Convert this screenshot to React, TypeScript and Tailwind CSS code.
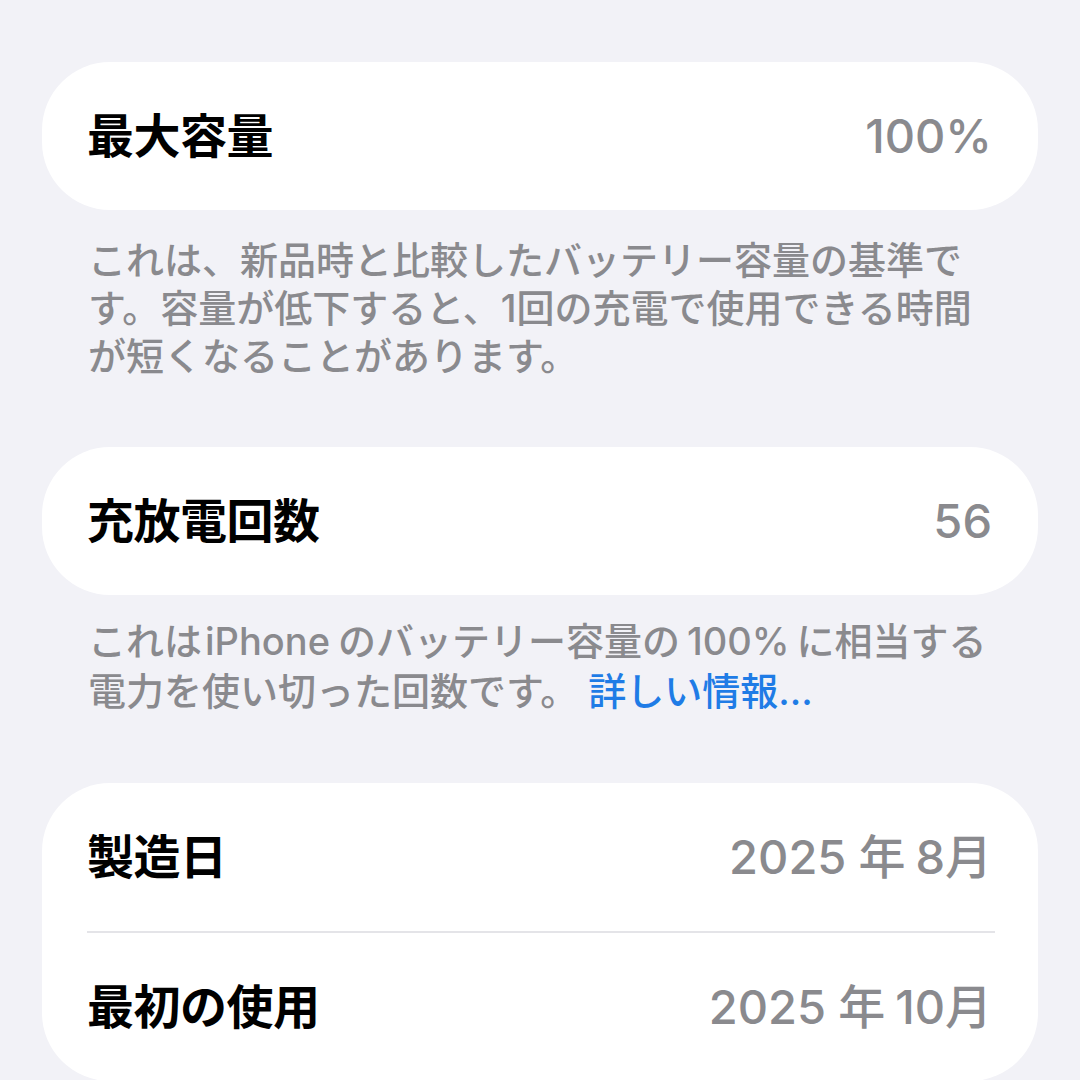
import React from 'react'

const FONT = { fontFamily: 'Inter, "Noto Sans CJK JP", sans-serif' }

function Row({ label, value }: { label: string; value: React.ReactNode }) {
  return (
    <div className="h-[148px] flex items-center justify-between pl-[45px] pr-[46px]">
      <span className="text-[47px] font-bold text-black tracking-[-0.5px]">{label}</span>
      <span className="text-[47px] font-medium text-[#8a8a8e]">{value}</span>
    </div>
  )
}

function YearMonth({ year, month }: { year: string; month: string }) {
  return (
    <>
      {year}
      <span className="ml-[12px] mr-[10px]">年</span>
      {month}月
    </>
  )
}

export default function App() {
  return (
    <div className="w-[1080px] h-[1080px] overflow-hidden bg-[#f2f2f7] pt-[62px] px-[42px]" style={FONT}>
      {/* 最大容量 */}
      <div className="rounded-[68px] bg-white">
        <Row label="最大容量" value="100%" />
      </div>
      <p className="px-[46px] pt-[26px] text-[38px] leading-[48px] font-medium text-[#8a8a8e] whitespace-nowrap">
        これは、新品時と比較したバッテリー容量の基準で
        <br />
        す。容量が低下すると、1回の充電で使用できる時間
        <br />
        が短くなることがあります。
      </p>

      {/* 充放電回数 */}
      <div className="mt-[67px] rounded-[68px] bg-white">
        <Row label="充放電回数" value="56" />
      </div>
      <p className="px-[46px] pt-[21px] text-[38px] leading-[50px] font-medium text-[#8a8a8e] whitespace-nowrap">
        これは<span className="ml-[3px] mr-[8px]">iPhone</span>のバッテリー容量の<span className="mx-[7px]">100%</span>に相当する
        <br />
        電力を使い切った回数です。<span className="ml-[10px] text-[#1f7ce6]">詳しい情報...</span>
      </p>

      {/* 製造日 / 最初の使用 */}
      <div className="mt-[67px] rounded-[68px] bg-white">
        <Row label="製造日" value={<YearMonth year="2025" month="8" />} />
        <div className="ml-[45px] mr-[43px] h-[2px] bg-[#e4e4e8]" />
        <Row label="最初の使用" value={<YearMonth year="2025" month="10" />} />
      </div>
    </div>
  )
}
